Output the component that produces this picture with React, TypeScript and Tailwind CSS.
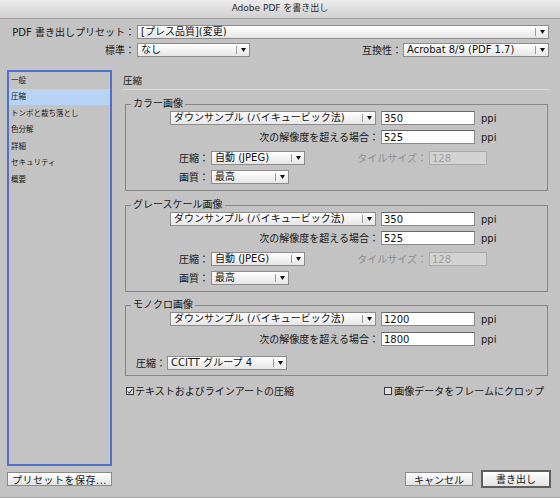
import React from 'react';

const Arrow = () => (
  <svg width="5" height="4" viewBox="0 0 5 4">
    <path d="M0 0h5L2.5 4z" fill="#111" />
  </svg>
);

function Select({ value, w }: { value: string; w: string }) {
  return (
    <div className={`${w} h-[14px] flex items-stretch border border-[#8c8c8c] bg-linear-to-b from-white to-[#e6e6e6] text-[#111]`}>
      <span className="flex-1 pl-[3px] leading-[12px] whitespace-nowrap overflow-hidden">{value}</span>
      <span className="w-px my-[2px] bg-[#9a9a9a]" />
      <span className="w-[12px] flex items-center justify-center">
        <Arrow />
      </span>
    </div>
  );
}

function Field({ value, w, disabled }: { value: string; w: string; disabled?: boolean }) {
  return (
    <input
      readOnly
      disabled={disabled}
      value={value}
      className={`${w} h-[14px] px-[2px] border outline-none ${
        disabled
          ? 'border-[#aaaaaa] bg-[#d3d3d3] text-[#9d9d9d]'
          : 'border-[#8a8a8a] border-t-[#666] bg-white text-[#111]'
      }`}
    />
  );
}

function Check({ checked }: { checked?: boolean }) {
  return (
    <span className="w-[8px] h-[8px] border border-[#3a3a3a] bg-[#dedede] flex items-center justify-center">
      {checked && (
        <svg width="7" height="7" viewBox="0 0 7 7">
          <path d="M1 3.5l1.8 2L6 0.8" fill="none" stroke="#111" strokeWidth="1.1" />
        </svg>
      )}
    </span>
  );
}

// one group box for color / grayscale
function ImageGroup({ title, mt, res, over }: { title: string; mt: string; res: string; over: string }) {
  return (
    <fieldset className={`${mt} ml-[2px] w-[423px] border border-[#868686] pt-[1px] pb-[6px]`}>
      <legend className="ml-[5px] px-[2px] leading-[12px]">{title}</legend>
      <div className="flex items-center h-[14px] pl-[44px]">
        <Select w="w-[206px]" value="ダウンサンプル (バイキュービック法)" />
        <span className="ml-[5px]"><Field w="w-[94px]" value={res} /></span>
        <span className="ml-[6px]">ppi</span>
      </div>
      <div className="mt-[5px] flex items-center h-[14px]">
        <span className="w-[255px] text-right pr-[2px] whitespace-nowrap">次の解像度を超える場合：</span>
        <Field w="w-[94px]" value={over} />
        <span className="ml-[6px]">ppi</span>
      </div>
      <div className="mt-[7px] flex items-center h-[14px]">
        <span className="w-[85px] text-right pr-[2px]">圧縮：</span>
        <Select w="w-[94px]" value="自動 (JPEG)" />
        <span className="w-[124px] text-right pr-[2px] text-[#8e8e8e]">タイルサイズ：</span>
        <Field w="w-[58px]" value="128" disabled />
      </div>
      <div className="mt-[5px] flex items-center h-[14px]">
        <span className="w-[85px] text-right pr-[2px]">画質：</span>
        <Select w="w-[78px]" value="最高" />
      </div>
    </fieldset>
  );
}

const sections = ['一般', '圧縮', 'トンボと裁ち落とし', '色分解', '詳細', 'セキュリティ', '概要'];

export default function App() {
  return (
    <div className="w-[560px] h-[498px] bg-[#c3c3c3] flex flex-col text-[10px] text-[#171717] font-['DejaVu_Sans','Noto_Sans_CJK_JP',sans-serif] overflow-hidden">
      <div className="h-[19px] shrink-0 bg-linear-to-b from-[#ececec] to-[#d0d0d0] border-b border-[#9c9c9c] flex items-center justify-center text-[9px] text-[#2a2a2a]">
        Adobe PDF を書き出し
      </div>

      <div className="mt-[6px] flex items-center h-[14px]">
        <span className="w-[137px] text-right pr-[2px] whitespace-nowrap">PDF 書き出しプリセット：</span>
        <Select w="w-[412px]" value="[プレス品質](変更)" />
      </div>
      <div className="mt-[4px] flex items-center h-[14px]">
        <span className="w-[137px] text-right pr-[2px]">標準：</span>
        <Select w="w-[113px]" value="なし" />
        <span className="ml-auto pr-[1px]">互換性：</span>
        <Select w="w-[146px]" value="Acrobat 8/9 (PDF 1.7)" />
        <span className="w-[11px]" />
      </div>

      <div className="mt-[13px] flex h-[396px] shrink-0">
        <div className="ml-[7px] w-[105px] border-2 border-[#4f70cc] text-[7.5px]">
          {sections.map((s) => (
            <div
              key={s}
              className={`h-[16.5px] pl-[2px] flex items-center ${s === '圧縮' ? 'bg-[#b8d3f5]' : ''}`}
            >
              {s}
            </div>
          ))}
        </div>

        <div className="ml-[11px] w-[426px] flex flex-col">
          <div className="pt-[6px] leading-[10px] text-[9.5px]">圧縮</div>
          <div className="mt-[3px] h-px bg-[#dadada]" />

          <ImageGroup title="カラー画像" mt="mt-[8px]" res="350" over="525" />
          <ImageGroup title="グレースケール画像" mt="mt-[8px]" res="350" over="525" />

          <fieldset className="mt-[7px] ml-[2px] w-[423px] border border-[#868686] pt-[1px] pb-[5px]">
            <legend className="ml-[5px] px-[2px] leading-[12px]">モノクロ画像</legend>
            <div className="flex items-center h-[14px] pl-[44px]">
              <Select w="w-[206px]" value="ダウンサンプル (バイキュービック法)" />
              <span className="ml-[5px]"><Field w="w-[94px]" value="1200" /></span>
              <span className="ml-[6px]">ppi</span>
            </div>
            <div className="mt-[6px] flex items-center h-[14px]">
              <span className="w-[255px] text-right pr-[2px] whitespace-nowrap">次の解像度を超える場合：</span>
              <Field w="w-[94px]" value="1800" />
              <span className="ml-[6px]">ppi</span>
            </div>
            <div className="mt-[10px] flex items-center h-[14px]">
              <span className="w-[41px] text-right pr-[1px]">圧縮：</span>
              <Select w="w-[120px]" value="CCITT グループ 4" />
            </div>
          </fieldset>

          <div className="mt-[8px] h-[14px] flex items-center pl-[3px] pr-[5px]">
            <Check checked />
            <span className="ml-[1px]">テキストおよびラインアートの圧縮</span>
            <span className="ml-auto"><Check /></span>
            <span className="ml-[2px]">画像データをフレームにクロップ</span>
          </div>
        </div>
      </div>

      <div className="mt-[4px] h-[18px] flex items-center shrink-0">
        <button className="ml-[7px] w-[105px] h-[14px] border border-[#8a8a8a] bg-linear-to-b from-white to-[#e2e2e2] tracking-[0.5px]">
          プリセットを保存...
        </button>
        <button className="ml-auto w-[68px] h-[14px] border border-[#8a8a8a] bg-linear-to-b from-white to-[#e2e2e2]">
          キャンセル
        </button>
        <button className="ml-[8px] w-[70px] h-[18px] border-2 border-[#5e5e5e] bg-linear-to-b from-white to-[#e2e2e2]">
          書き出し
        </button>
        <span className="w-[9px]" />
      </div>
      <div className="flex-1 border-b border-[#a5a5a5]" />
    </div>
  );
}
